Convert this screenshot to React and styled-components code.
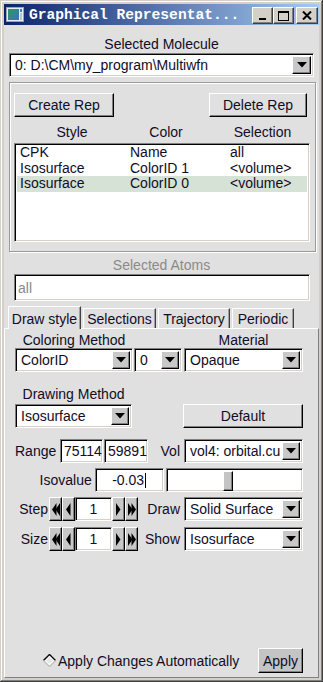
import styled, { createGlobalStyle } from "styled-components";

const GlobalStyle = createGlobalStyle`
  * { box-sizing: border-box; }
  html, body { margin: 0; padding: 0; background: #e0e0e0; }
  body {
    font-family: "Liberation Sans", Arial, sans-serif;
    font-size: 14px;
    color: #120c26;
  }
`;

const raised = `
  border: 1px solid;
  border-color: #fff #000 #000 #fff;
  box-shadow: inset -1px -1px #808080;
`;

const sunken = `
  border: 1px solid;
  border-color: #808080 #fff #fff #808080;
  box-shadow: inset 1px 1px #000, inset -1px -1px #d4d0c8;
`;

const Window = styled.div`
  width: 323px;
  height: 682px;
  padding: 4px;
  display: flex;
  flex-direction: column;
  background: #d4d0c8;
  box-shadow: inset -1px -1px #404040, inset 1px 1px #d4d0c8,
    inset -2px -2px #808080, inset 2px 2px #fff;
`;

const TitleBar = styled.div`
  height: 21px;
  display: flex;
  align-items: center;
  padding: 0 1px 0 2px;
  background: linear-gradient(90deg, #0a246a, #a6caf0);
`;

const TitleText = styled.span`
  flex: 1;
  margin-left: 5px;
  color: #fff;
  font-family: "Liberation Mono", "Courier New", monospace;
  font-weight: bold;
  font-size: 14.6px;
  white-space: nowrap;
  overflow: hidden;
`;

const TitleButton = styled.div`
  width: ${(p) => p.$w}px;
  height: 17px;
  margin-left: ${(p) => p.$gap || 0}px;
  margin-top: 2px;
  display: flex;
  align-items: center;
  justify-content: center;
  background: #d4d0c8;
  border: 1px solid;
  border-color: #fff #404040 #404040 #fff;
  box-shadow: inset -1px -1px #808080;
`;

const Client = styled.div`
  flex: 1;
  display: flex;
  flex-direction: column;
  background: #e0e0e0;
`;

const Caption = styled.div`
  line-height: 16px;
  text-align: center;
  color: ${(p) => p.$color || "inherit"};
  margin-top: ${(p) => p.$top || 0}px;
`;

const Combo = styled.div`
  display: flex;
  align-items: stretch;
  width: ${(p) => p.$w}px;
  height: 24px;
  margin-left: ${(p) => p.$ml || 0}px;
  padding: 2px;
  background: #fff;
  ${sunken}
`;

const ComboText = styled.span`
  flex: 1;
  min-width: 0;
  padding-left: 3px;
  line-height: 18px;
  white-space: nowrap;
  overflow: hidden;
`;

const ArrowButton = styled.div`
  width: ${(p) => p.$w || 18}px;
  display: flex;
  align-items: center;
  justify-content: center;
  background: #c8c8c8;
  ${raised}
`;

const Group = styled.div`
  margin: 5px 0 0 5px;
  width: 307px;
  height: 170px;
  padding: 10px 0 0 4px;
  border: 1px solid #9a9a9a;
  box-shadow: inset 1px 1px #fff, 1px 1px #fff;
`;

const ButtonRow = styled.div`
  display: flex;
  justify-content: space-between;
  width: 293px;
`;

const Button = styled.div`
  width: ${(p) => p.$w}px;
  height: ${(p) => p.$h || 24}px;
  display: flex;
  align-items: center;
  justify-content: center;
  background: ${(p) => p.$bg || "#e0e0e0"};
  ${raised}
`;

const HeaderRow = styled.div`
  display: grid;
  grid-template-columns: 116px 72px 1fr;
  width: 296px;
  margin-top: 7px;
  line-height: 16px;
  text-align: center;
`;

const HeaderCell = styled.span`
  padding-left: ${(p) => p.$pl || 0}px;
`;

const ListBox = styled.div`
  width: 296px;
  height: 99px;
  margin-top: 3px;
  padding: 1px 2px;
  background: #fff;
  ${sunken}
`;

const ListRow = styled.div`
  display: grid;
  grid-template-columns: 110px 100px 1fr;
  height: 15.5px;
  line-height: 15.5px;
  padding-left: 3px;
  background: ${(p) => (p.$selected ? "#d6e2d6" : "transparent")};
`;

const Entry = styled.div`
  width: ${(p) => p.$w}px;
  height: ${(p) => p.$h || 24}px;
  margin-left: ${(p) => p.$ml || 0}px;
  padding: 0 3px;
  display: flex;
  align-items: center;
  justify-content: ${(p) => p.$align || "flex-start"};
  background: #fff;
  color: ${(p) => p.$color || "inherit"};
  line-height: 16px;
  white-space: nowrap;
  overflow: hidden;
  ${sunken}
`;

const Cursor = styled.span`
  display: inline-block;
  width: 1px;
  height: 15px;
  margin-left: 1px;
  background: #000;
`;

const TabRow = styled.div`
  display: flex;
  align-items: flex-end;
  gap: 2px;
  height: 22px;
  margin: 5px 0 0 4px;
`;

const Tab = styled.div`
  width: ${(p) => p.$w}px;
  height: ${(p) => (p.$active ? 23 : 20)}px;
  display: flex;
  align-items: flex-end;
  justify-content: center;
  padding-bottom: ${(p) => (p.$active ? 2 : 1)}px;
  line-height: 16px;
  background: #e0e0e0;
  border-top: 1px solid #fff;
  border-left: 1px solid #fff;
  border-right: 1px solid #404040;
  box-shadow: inset -1px 0 #a0a0a0;
  ${(p) => p.$active && "margin-bottom: -1px; position: relative; z-index: 1;"}
`;

const Panel = styled.div`
  flex: 1;
  display: flex;
  flex-direction: column;
  padding: 3px 15px 4px 10px;
  border-top: 1px solid #fff;
  border-left: 1px solid #fff;
  border-right: 1px solid #808080;
  border-bottom: 1px solid #808080;
`;

const Row = styled.div`
  display: flex;
  align-items: ${(p) => p.$align || "center"};
  margin-top: ${(p) => p.$top || 0}px;
`;

const Stack = styled.div`
  display: flex;
  flex-direction: column;
  margin-left: ${(p) => p.$ml || 0}px;
`;

const Label = styled.span`
  width: ${(p) => (p.$w ? `${p.$w}px` : "auto")};
  margin-right: ${(p) => p.$mr || 0}px;
  text-align: ${(p) => p.$align || "left"};
  line-height: 16px;
  white-space: nowrap;
`;

const RightGroup = styled.div`
  margin-left: auto;
  display: flex;
  align-items: center;
`;

const Scale = styled.div`
  width: 138px;
  height: 24px;
  margin-left: 2px;
  padding: 2px 0;
  background: #fff;
  ${sunken}
`;

const Thumb = styled.div`
  width: 10px;
  height: 20px;
  margin-left: ${(p) => p.$pos}px;
  background: #c4c4c4;
  ${raised}
`;

const SpinButton = styled.div`
  width: ${(p) => p.$w}px;
  height: 24px;
  display: flex;
  align-items: center;
  justify-content: center;
  background: #c8c8c8;
  ${raised}
`;

const BottomRow = styled.div`
  margin-top: auto;
  display: flex;
  align-items: center;
  padding-left: 28px;
`;

const RadioText = styled.span`
  margin-left: 2px;
  line-height: 16px;
`;

const DownArrow = () => (
  <svg width="10" height="6" viewBox="0 0 10 6">
    <polygon points="0,0 10,0 5,5.5" fill="#000" />
  </svg>
);

const Tri = ({ dir, double }) => {
  const w = double ? 8 : 5;
  const one = (x) =>
    dir === "left"
      ? `${x + 4.5},0 ${x + 4.5},13 ${x},6.5`
      : `${x},0 ${x},13 ${x + 4.5},6.5`;
  return (
    <svg width={w} height="13" viewBox={`0 0 ${w} 13`}>
      <polygon points={one(0)} fill="#000" />
      {double && <polygon points={one(3.5)} fill="#000" />}
    </svg>
  );
};

const Spinner = () => (
  <>
    <SpinButton $w={13}>
      <Tri dir="left" double />
    </SpinButton>
    <SpinButton $w={13}>
      <Tri dir="left" />
    </SpinButton>
    <Entry $w={37} $align="center">1</Entry>
    <SpinButton $w={13}>
      <Tri dir="right" />
    </SpinButton>
    <SpinButton $w={13}>
      <Tri dir="right" double />
    </SpinButton>
  </>
);

const ComboBox = ({ w, ml, text, aw }) => (
  <Combo $w={w} $ml={ml}>
    <ComboText>{text}</ComboText>
    <ArrowButton $w={aw}>
      <DownArrow />
    </ArrowButton>
  </Combo>
);

const AppIcon = () => (
  <svg width="18" height="15" viewBox="0 0 18 15">
    <defs>
      <linearGradient id="ig" x1="0" y1="0" x2="1" y2="1">
        <stop offset="0" stopColor="#2f9a5a" />
        <stop offset="1" stopColor="#3d6fc4" />
      </linearGradient>
    </defs>
    <rect x="0.5" y="0.5" width="17" height="14" fill="#e8ecf0" stroke="#9aa4b0" />
    <rect x="2" y="2" width="11" height="11" fill="url(#ig)" />
    <rect x="14" y="2" width="2" height="3" fill="#3a7ad0" />
    <rect x="14" y="6" width="2" height="7" fill="#b0c4dc" />
  </svg>
);

const Diamond = () => (
  <svg width="13" height="13" viewBox="0 0 13 13">
    <polygon points="6.5,0.5 12.5,6.5 6.5,12.5 0.5,6.5" fill="#fff" />
    <polyline points="0.5,6.5 6.5,0.5 12.5,6.5" fill="none" stroke="#000" strokeWidth="1.4" />
    <polyline points="0.5,6.5 6.5,12.5 12.5,6.5" fill="none" stroke="#c0c0c0" strokeWidth="1.4" />
    <polygon points="6.5,3 10,6.5 6.5,10 3,6.5" fill="#e6e6e6" />
  </svg>
);

const reps = [
  ["CPK", "Name", "all"],
  ["Isosurface", "ColorID 1", "<volume>"],
  ["Isosurface", "ColorID 0", "<volume>"],
];

const tabs = [
  ["Draw style", 73],
  ["Selections", 73],
  ["Trajectory", 72],
  ["Periodic", 62],
];

export default function App() {
  return (
    <>
      <GlobalStyle />
      <Window>
        <TitleBar>
          <AppIcon />
          <TitleText>Graphical Representat...</TitleText>
          <TitleButton $w={21}>
            <svg width="8" height="9" viewBox="0 0 8 9">
              <rect x="0" y="7" width="7" height="2" fill="#000" />
            </svg>
          </TitleButton>
          <TitleButton $w={21}>
            <svg width="11" height="10" viewBox="0 0 11 10">
              <rect x="0.5" y="0.5" width="10" height="9" fill="none" stroke="#000" />
              <rect x="0" y="0" width="11" height="2" fill="#000" />
            </svg>
          </TitleButton>
          <TitleButton $w={22} $gap={2}>
            <svg width="10" height="9" viewBox="0 0 10 9">
              <path d="M1 0.5 L9 8.5 M9 0.5 L1 8.5" stroke="#000" strokeWidth="2" />
            </svg>
          </TitleButton>
        </TitleBar>
        <Client>
          <Caption $top={11}>Selected Molecule</Caption>
          <Row $top={1}>
            <ComboBox w={305} ml={5} text="0: D:\CM\my_program\Multiwfn" aw={19} />
          </Row>
          <Group>
            <ButtonRow>
              <Button $w={100}>Create Rep</Button>
              <Button $w={98}>Delete Rep</Button>
            </ButtonRow>
            <HeaderRow>
              <HeaderCell>Style</HeaderCell>
              <HeaderCell>Color</HeaderCell>
              <HeaderCell $pl={13}>Selection</HeaderCell>
            </HeaderRow>
            <ListBox>
              {reps.map((r, i) => (
                <ListRow key={i} $selected={i === 2}>
                  <span>{r[0]}</span>
                  <span>{r[1]}</span>
                  <span>{r[2]}</span>
                </ListRow>
              ))}
            </ListBox>
          </Group>
          <Caption $top={5} $color="#8a8a8a">
            Selected Atoms
          </Caption>
          <Row $top={1}>
            <Entry $w={296} $h={27} $ml={10} $color="#8a8a8a">
              all
            </Entry>
          </Row>
          <TabRow>
            {tabs.map(([name, w], i) => (
              <Tab key={name} $w={w} $active={i === 0}>
                {name}
              </Tab>
            ))}
          </TabRow>
          <Panel>
            <Row $align="flex-end">
              <Stack>
                <Caption>Coloring Method</Caption>
                <ComboBox w={118} text="ColorID" />
              </Stack>
              <Stack $ml={1}>
                <ComboBox w={48} text="0" />
              </Stack>
              <Stack $ml={2}>
                <Caption>Material</Caption>
                <ComboBox w={119} text="Opaque" />
              </Stack>
            </Row>
            <Row $top={14} $align="flex-end">
              <Stack>
                <Caption>Drawing Method</Caption>
                <Row $top={2}>
                  <ComboBox w={117} text="Isosurface" />
                </Row>
              </Stack>
              <RightGroup>
                <Button $w={120}>Default</Button>
              </RightGroup>
            </Row>
            <Row $top={11}>
              <Label $w={45}>Range</Label>
              <Entry $w={43}>75114</Entry>
              <Entry $w={44} $ml={1}>
                59891
              </Entry>
              <RightGroup>
                <Label $mr={4}>Vol</Label>
                <ComboBox w={119} text="vol4: orbital.cu" />
              </RightGroup>
            </Row>
            <Row $top={5}>
              <Label $w={77} $align="right" $mr={3}>
                Isovalue
              </Label>
              <Entry $w={69} $align="center">
                -0.03
                <Cursor />
              </Entry>
              <Scale>
                <Thumb $pos={56} />
              </Scale>
            </Row>
            <Row $top={5}>
              <Label $w={33} $align="right" $mr={1}>
                Step
              </Label>
              <Spinner />
              <RightGroup>
                <Label $mr={4}>Draw</Label>
                <ComboBox w={119} text="Solid Surface" />
              </RightGroup>
            </Row>
            <Row $top={6}>
              <Label $w={33} $align="right" $mr={1}>
                Size
              </Label>
              <Spinner />
              <RightGroup>
                <Label $mr={4}>Show</Label>
                <ComboBox w={119} text="Isosurface" />
              </RightGroup>
            </Row>
            <BottomRow>
              <Diamond />
              <RadioText>Apply Changes Automatically</RadioText>
              <RightGroup>
                <Button $w={45} $h={25} $bg="#c4c4c4">
                  Apply
                </Button>
              </RightGroup>
            </BottomRow>
          </Panel>
        </Client>
      </Window>
    </>
  );
}
